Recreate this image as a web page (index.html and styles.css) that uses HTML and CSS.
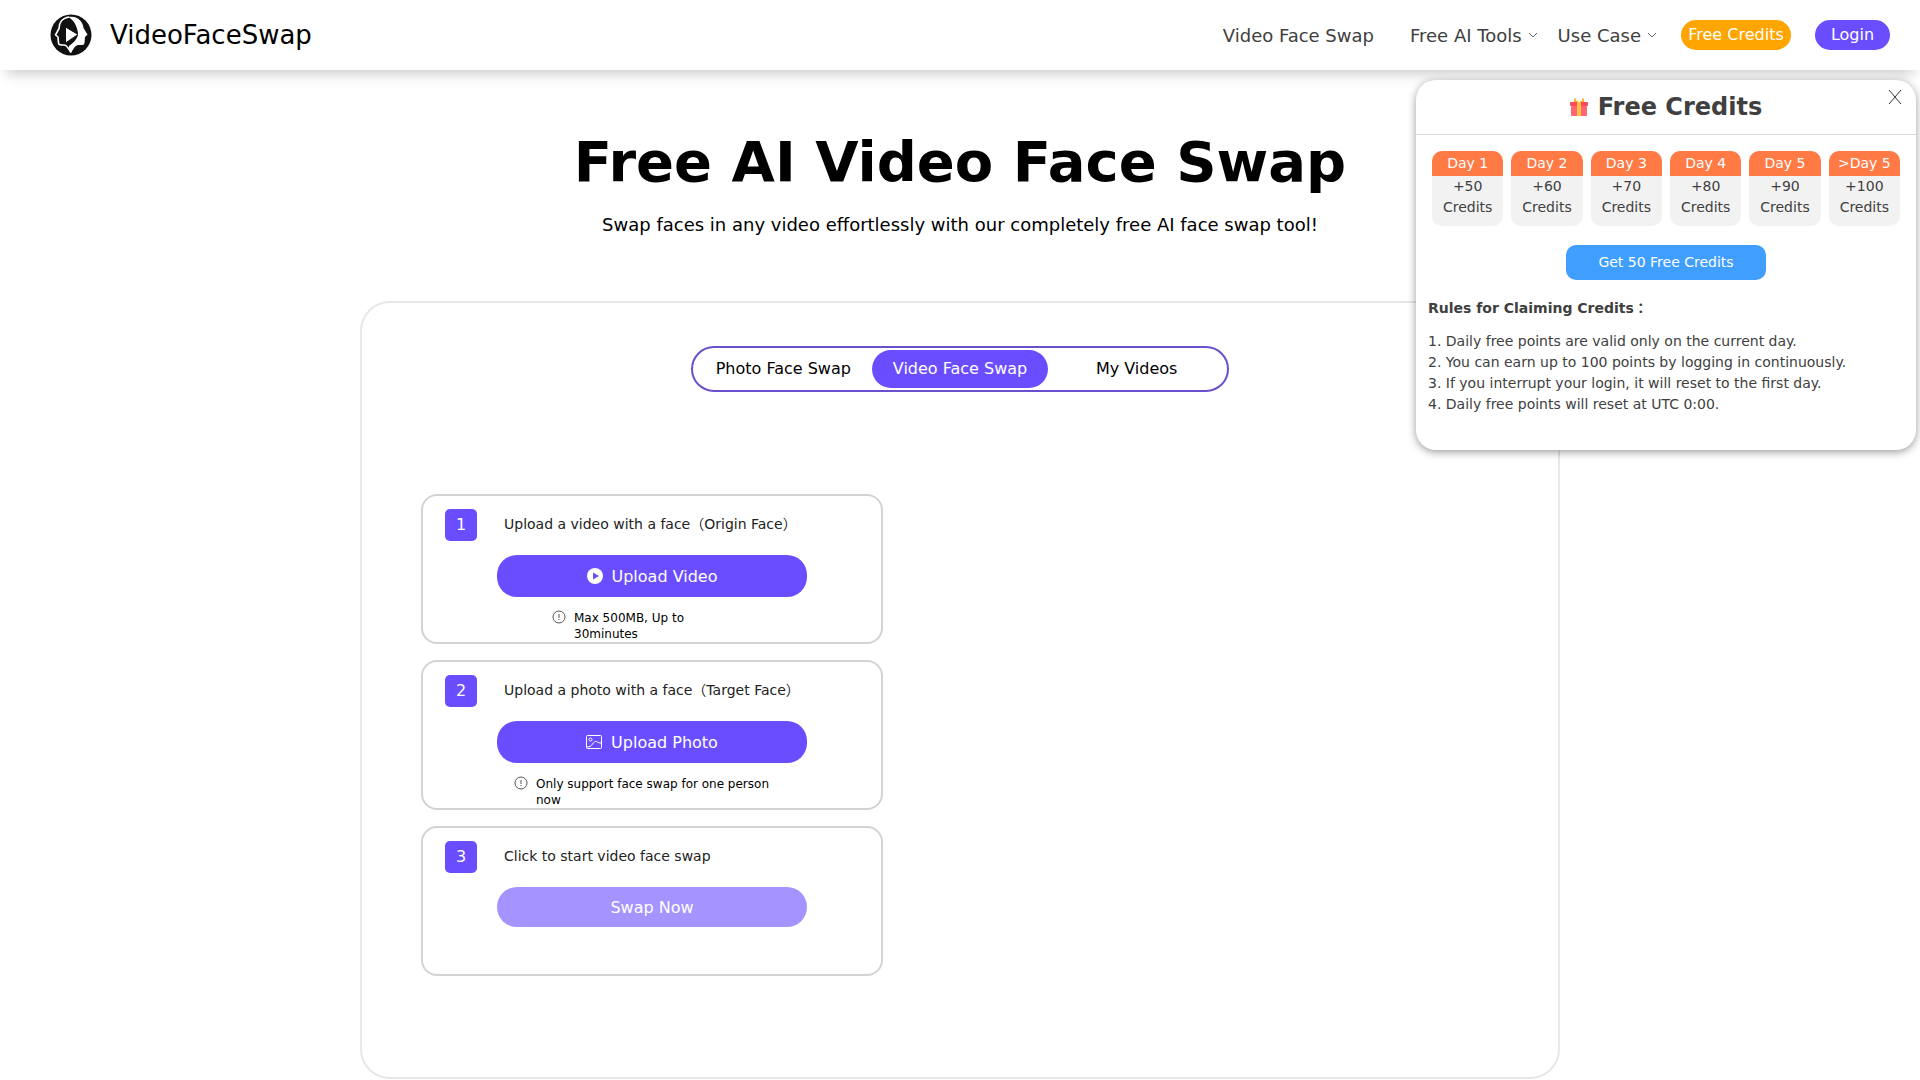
FILE: index.html
```html
<!DOCTYPE html>
<html lang="en">
<head>
<meta charset="utf-8">
<meta name="viewport" content="width=device-width, initial-scale=1">
<title>VideoFaceSwap</title>
<link rel="stylesheet" href="styles.css">
</head>
<body>
<header class="site-header">
  <a class="brand" href="#">
    <svg class="brand-logo" viewBox="0 0 42 42" aria-hidden="true">
      <circle cx="21" cy="21" r="20.500" fill="#111"/>
      <path d="M19 3C12 4 9 9 9 14.500L5.500 21L8 23L8.500 29C8.500 31.500 12 31 14 31C17 31 18 34 21 38.500" fill="none" stroke="#fff" stroke-width="1.600" stroke-linejoin="round"/>
      <path d="M18 3C28 1 33 8 33.500 14L37.500 20.500L35 23L34.500 29C34.500 31.500 31 31 28.500 31C25 31.500 24 34 21 39C17 34 19 31.500 21 30.500C25 27 28 24 28 19C27 12 24 6 18 3Z" fill="#fff"/>
      <path d="M20 33L25 30L21.500 36.500Z" fill="#fff"/>
      <path d="M15.500 13V29L28 20.500Z" fill="#fff" stroke="#111" stroke-width="1"/>
    </svg>
    <span>VideoFaceSwap</span>
  </a>
  <nav class="main-nav" aria-label="Main">
    <a class="nav-link nav-home" href="#">Video Face Swap</a>
    <a class="nav-link" href="#">Free AI Tools
      <svg class="chevron" viewBox="0 0 10 6" aria-hidden="true"><path d="M1 1l4 4 4-4"/></svg></a>
    <a class="nav-link" href="#">Use Case
      <svg class="chevron" viewBox="0 0 10 6" aria-hidden="true"><path d="M1 1l4 4 4-4"/></svg></a>
    <button class="pill pill-credits" type="button">Free Credits</button>
    <button class="pill pill-login" type="button">Login</button>
  </nav>

  <section class="credits-popup" aria-labelledby="credits-title">
    <div class="popup-head">
      <svg class="gift" viewBox="0 0 18 18" aria-hidden="true">
        <path d="M8 4L5 3.500V.5M10 4l3-.5V.5" fill="none" stroke="#ffb52e" stroke-width="2"/>
        <rect x="0" y="4" width="18" height="4" rx="1" fill="#fb4a59"/>
        <rect x="1" y="8" width="16" height="10" rx="1" fill="#ff6573"/>
        <rect x="7" y="4" width="4" height="14" fill="#ffc043"/>
      </svg>
      <h2 class="popup-title" id="credits-title">Free Credits</h2>
      <button class="popup-close" type="button" aria-label="Close">
        <svg viewBox="0 0 14 16" aria-hidden="true"><path d="M1 1l12 14M13 1L1 15"/></svg>
      </button>
    </div>
    <ul class="days">
      <li class="day"><span class="day-name">Day 1</span><span class="day-value">+50 Credits</span></li>
      <li class="day"><span class="day-name">Day 2</span><span class="day-value">+60 Credits</span></li>
      <li class="day"><span class="day-name">Day 3</span><span class="day-value">+70 Credits</span></li>
      <li class="day"><span class="day-name">Day 4</span><span class="day-value">+80 Credits</span></li>
      <li class="day"><span class="day-name">Day 5</span><span class="day-value">+90 Credits</span></li>
      <li class="day"><span class="day-name">&gt;Day 5</span><span class="day-value">+100 Credits</span></li>
    </ul>
    <button class="claim" type="button">Get 50 Free Credits</button>
    <h3 class="rules-title">Rules for Claiming Credits：</h3>
    <ol class="rules">
      <li>Daily free points are valid only on the current day.</li>
      <li>You can earn up to 100 points by logging in continuously.</li>
      <li>If you interrupt your login, it will reset to the first day.</li>
      <li>Daily free points will reset at UTC 0:00.</li>
    </ol>
  </section>
</header>

<main class="page">
  <h1 class="title">Free AI Video Face Swap</h1>
  <p class="subtitle">Swap faces in any video effortlessly with our completely free AI face swap tool!</p>

  <section class="panel">
    <div class="tabs">
      <button class="tab" type="button">Photo Face Swap</button>
      <button class="tab tab-active" type="button">Video Face Swap</button>
      <button class="tab" type="button">My Videos</button>
    </div>
    <div class="workspace">
      <div class="steps">
        <section class="step">
          <div class="step-head"><span class="step-number">1</span><h2 class="step-label">Upload a video with a face（Origin Face）</h2></div>
          <button class="action" type="button">
            <svg class="action-icon" viewBox="0 0 16 16" aria-hidden="true"><circle cx="8" cy="8" r="8" fill="#fff"/><path d="M6 4.500v7L12 8z" fill="#6a4dff"/></svg>
            Upload Video
          </button>
          <p class="hint hint-video">
            <svg class="hint-icon" viewBox="0 0 14 14" aria-hidden="true"><circle cx="7" cy="7" r="6"/><path d="M7 4v4M7 9v1"/></svg>
            <span>Max 500MB, Up to 30minutes</span>
          </p>
        </section>
        <section class="step">
          <div class="step-head"><span class="step-number">2</span><h2 class="step-label">Upload a photo with a face（Target Face）</h2></div>
          <button class="action" type="button">
            <svg class="action-icon" viewBox="0 0 16 16" aria-hidden="true"><g fill="none" stroke="#fff"><rect x=".5" y="1.500" width="15" height="13" rx="1"/><circle cx="4.500" cy="5.500" r="1.500"/><path d="M.5 13c3 0 5-1 6-3s3-3 4-2.500S12 9 15.500 9"/></g></svg>
            Upload Photo
          </button>
          <p class="hint hint-photo">
            <svg class="hint-icon" viewBox="0 0 14 14" aria-hidden="true"><circle cx="7" cy="7" r="6"/><path d="M7 4v4M7 9v1"/></svg>
            <span>Only support face swap for one person now</span>
          </p>
        </section>
        <section class="step">
          <div class="step-head"><span class="step-number">3</span><h2 class="step-label">Click to start video face swap</h2></div>
          <button class="action action-swap" type="button" disabled>Swap Now</button>
        </section>
      </div>
    </div>
  </section>
</main>
</body>
</html>
```
FILE: styles.css
```css
* { box-sizing: border-box; }
body, h1, h2, h3, p, ul, ol { margin: 0; padding: 0; }
body {
  background: #fff;
  color: #000;
  font-family: "DejaVu Sans", "Noto Sans CJK JP", sans-serif;
  font-size: 16px;
}
button { border: 0; padding: 0; font: inherit; cursor: pointer; }
a { color: inherit; text-decoration: none; }
svg { display: block; flex: none; }
ul, ol { list-style: none; }

/* Header */
.site-header {
  position: relative;
  z-index: 1;
  display: flex;
  align-items: center;
  justify-content: space-between;
  height: 70px;
  padding: 0 30px 0 50px;
  background: #fff;
  box-shadow: 0 10px 12px -6px rgba(0, 0, 0, .2);
}
.brand { display: flex; align-items: center; gap: 18px; font-size: 26px; }
.brand-logo { width: 42px; height: 42px; }
.main-nav { display: flex; align-items: center; color: #404040; }
.nav-link { display: flex; align-items: center; gap: 6px; margin-right: 20px; font-size: 18px; }
.nav-home { margin-right: 36px; }
.chevron { width: 10px; height: 6px; fill: none; stroke: #666; }
.pill { height: 30px; padding-bottom: 2px; border-radius: 15px; color: #fff; }
.pill-credits { width: 110px; margin: 0 24px 0 4px; background: #ffa500; }
.pill-login { width: 75px; background: #6a4dff; }

/* Free credits popup */
.credits-popup {
  position: absolute;
  top: 80px;
  right: 4px;
  width: 500px;
  padding-bottom: 35px;
  border-radius: 20px;
  background: #fff;
  box-shadow: 0 2px 8px rgba(0, 0, 0, .4);
  color: #404040;
  font-size: 14px;
  line-height: 21px;
}
.popup-head {
  display: flex;
  align-items: center;
  justify-content: center;
  gap: 10px;
  height: 55px;
  border-bottom: 1px solid #dcdcdc;
}
.gift { width: 18px; height: 18px; }
.popup-title { font-size: 24px; line-height: 28px; }
.popup-close { position: absolute; top: 9px; right: 14px; background: none; }
.popup-close svg { width: 14px; height: 16px; fill: none; stroke: #333; }
.days {
  display: grid;
  grid-template-columns: repeat(6, 1fr);
  gap: 8px;
  padding: 16px;
  text-align: center;
}
.day { overflow: hidden; height: 75px; border-radius: 10px; background: #f2f2f2; }
.day-name { display: block; height: 25px; line-height: 25px; background: #ff7a45; color: #fff; }
.day-value { display: block; padding: 0 8px; }
.claim {
  display: block;
  width: 200px;
  height: 35px;
  margin: 3px auto 18px;
  border-radius: 10px;
  background: #409eff;
  color: #fff;
}
.rules-title { margin: 0 12px 12px; font-size: 14px; line-height: 21px; }
.rules { padding: 0 12px; counter-reset: rule; }
.rules li { counter-increment: rule; }
.rules li::before { content: counter(rule) ". "; }

/* Main page */
.title { padding-top: 56px; font-size: 56px; line-height: 72px; text-align: center; }
.subtitle { margin-top: 14px; font-size: 18px; line-height: 26px; text-align: center; }
.panel {
  max-width: 1200px;
  margin: 63px auto 0;
  padding: 43px 59px 101px;
  border: 2px solid #e5e7eb;
  border-radius: 30px;
}
.tabs {
  display: grid;
  grid-template-columns: repeat(3, 1fr);
  width: 538px;
  margin: 0 auto 102px;
  padding: 2px;
  border: 2px solid #6a50cd;
  border-radius: 23px;
}
.tab { height: 38px; padding-bottom: 2px; border-radius: 19px; background: none; color: #000; }
.tab-active { background: #6a4dff; color: #fff; }
.workspace { display: grid; grid-template-columns: 3fr 4fr; }
.steps { display: grid; gap: 16px; }
.step {
  min-height: 150px;
  padding: 13px 22px 0;
  border: 2px solid #d3d3d3;
  border-radius: 16px;
}
.step-head { display: flex; align-items: center; gap: 27px; }
.step-number {
  width: 32px;
  border-radius: 5px;
  background: #6a4dff;
  color: #fff;
  line-height: 32px;
  text-align: center;
}
.step-label { padding-bottom: 2px; color: #222; font-size: 14px; font-weight: 400; line-height: 20px; }
.action {
  display: flex;
  align-items: center;
  justify-content: center;
  gap: 9px;
  width: 310px;
  height: 42px;
  margin: 14px auto 0;
  border-radius: 20px;
  background: #6a4dff;
  color: #fff;
}
.action-swap { height: 40px; background: #a594ff; cursor: default; }
.action-icon { width: 16px; height: 16px; }
.hint { display: flex; gap: 8px; margin: 13px auto 0; font-size: 12px; line-height: 16px; }
.hint-icon { width: 14px; height: 14px; fill: none; stroke: #555; }
.hint-video { width: 200px; padding-right: 40px; }
.hint-photo { width: 276px; }
```
